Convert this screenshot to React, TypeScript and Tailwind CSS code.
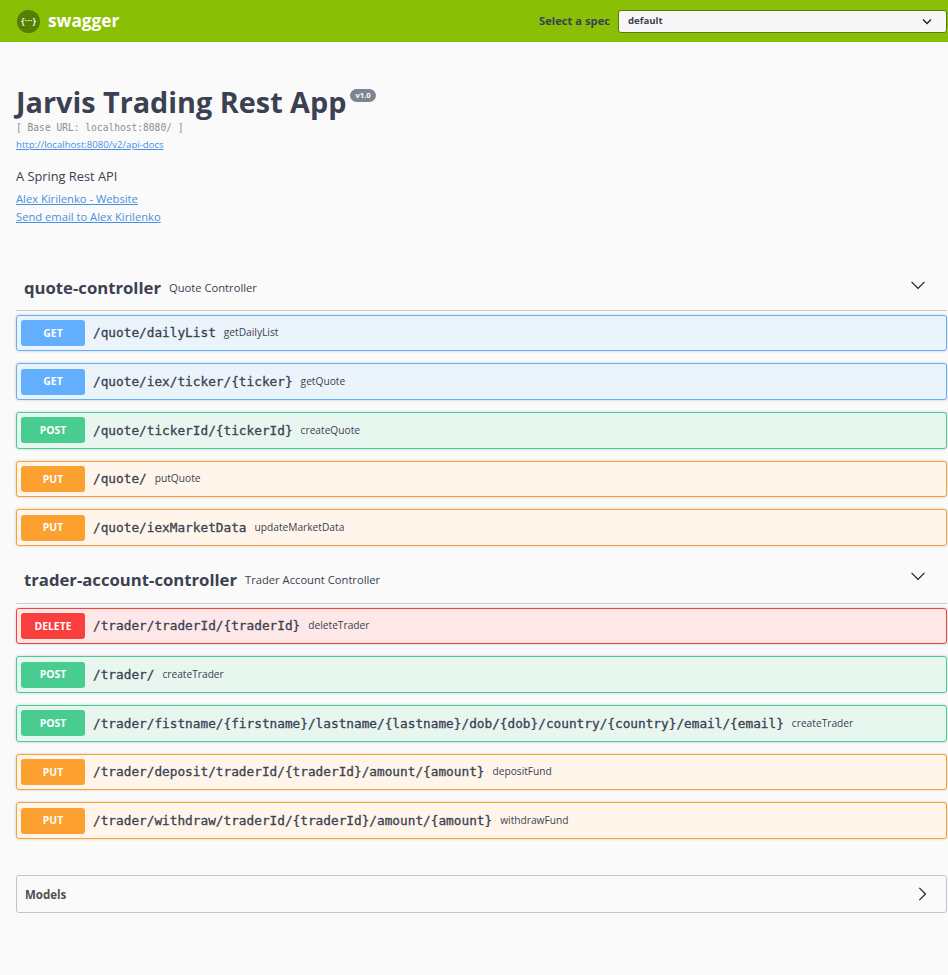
import React from "react";

type Method = "GET" | "POST" | "PUT" | "DELETE";

const styles: Record<Method, { row: string; badge: string }> = {
  GET: { row: "border-[#61affe] bg-[#ebf3fb]", badge: "bg-[#61affe]" },
  POST: { row: "border-[#49cc90] bg-[#e8f6f0]", badge: "bg-[#49cc90]" },
  PUT: { row: "border-[#fca130] bg-[#fff5ea]", badge: "bg-[#fca130]" },
  DELETE: { row: "border-[#f93e3e] bg-[#fde7e7]", badge: "bg-[#f93e3e]" },
};

function Row({ method, path, summary }: { method: Method; path: string; summary: string }) {
  const s = styles[method];
  return (
    <div className={`mb-[12px] flex h-[36.7px] items-center rounded-[3px] border pl-[4px] shadow-[0_0_3px_rgba(0,0,0,0.19)] ${s.row}`}>
      <span className={`flex h-[26px] w-[64px] shrink-0 items-center justify-center rounded-[3px] pt-[1px] text-[10.4px] font-bold text-white [font-family:'Open_Sans',sans-serif] ${s.badge}`}>
        {method}
      </span>
      <span className="ml-[8px] text-[12.76px] text-[#3b4151] [-webkit-text-stroke:0.3px_#3b4151] [font-family:'DejaVu_Sans_Mono',monospace]">{path}</span>
      <span className="ml-[8px] text-[10.2px] text-[#3b4151] [font-family:'Open_Sans',sans-serif]">{summary}</span>
    </div>
  );
}

function Chevron() {
  return (
    <svg width="16" height="16" viewBox="0 0 20 20" className="mb-[8px] fill-[#222]">
      <path d="M17.5 5.5 10 13 2.5 5.5 1.4 6.6 10 15.2l8.6-8.6z" />
    </svg>
  );
}

function Section({ name, desc, top, children }: { name: string; desc: string; top: string; children: React.ReactNode }) {
  return (
    <section>
      <div className={`flex items-center border-b border-[#c9cbd0] pl-[8px] pr-[21px] ${top}`}>
        <span className="pb-[2px] text-[16.7px] font-bold text-[#3b4151] [font-family:'Open_Sans',sans-serif]">{name}</span>
        <span className="ml-[8px] flex-1 text-[11.2px] text-[#3b4151] [font-family:'Open_Sans',sans-serif]">{desc}</span>
        <Chevron />
      </div>
      <div className="pt-[3.6px]">{children}</div>
    </section>
  );
}

export default function App() {
  return (
    <div className="min-h-[975px] bg-[#fafafa] [font-family:'Open_Sans',sans-serif]">
      <header className="flex h-[42px] items-center bg-[#89bf04] pl-[17px] pr-[1px]">
        <span className="flex h-[23px] w-[23px] items-center justify-center rounded-full bg-[#547f00] text-[9.5px] font-semibold text-white">{"{···}"}</span>
        <span className="ml-[8px] flex-1 text-[17.3px] font-bold text-white">swagger</span>
        <span className="mr-[8px] text-[11.2px] font-bold text-[#3b4151]">Select a spec</span>
        <div className="flex h-[23px] w-[329px] items-center justify-between rounded-[3px] border border-[#547f00] bg-[#f7f7f7] pl-[9px] pr-[14px] text-[9.6px] font-bold text-[#3b4151]">
          <span>default</span>
          <svg width="10" height="10" viewBox="0 0 20 20" className="fill-[#222]">
            <path d="M3 6 10 13 17 6 19 8 10 17 1 8z" />
          </svg>
        </div>
      </header>

      <main className="pl-[16px] pr-[1px]">
        <div className="pt-[42px] text-[#3b4151]">
          <div className="flex items-start">
            <h1 className="text-[28.8px] font-bold leading-[36px]">Jarvis Trading Rest App</h1>
            <span className="ml-[4px] mt-[4.5px] rounded-[8px] bg-[#7d8492] px-[5px] py-[1px] text-[7.6px] font-bold text-white">v1.0</span>
          </div>
          <div className="pt-[2px] text-[9.6px] leading-[12px] text-[#8b8e96] [font-family:'DejaVu_Sans_Mono',monospace]">[ Base URL: localhost:8080/ ]</div>
          <a className="mt-[4px] block text-[9.6px] leading-[13px] text-[#4990e2] underline">http://localhost:8080/v2/api-docs</a>
          <p className="mt-[17px] text-[12.8px] leading-[16px]">A Spring Rest API</p>
          <a className="mt-[7px] block text-[11.2px] leading-[16px] text-[#4990e2] underline">Alex Kirilenko - Website</a>
          <a className="mt-[2px] block text-[11.2px] leading-[16px] text-[#4990e2] underline">Send email to Alex Kirilenko</a>
        </div>

        <div className="pt-[42px]">
          <Section name="quote-controller" desc="Quote Controller" top="h-[44px]">
            <Row method="GET" path="/quote/dailyList" summary="getDailyList" />
            <Row method="GET" path="/quote/iex/ticker/{ticker}" summary="getQuote" />
            <Row method="POST" path="/quote/tickerId/{tickerId}" summary="createQuote" />
            <Row method="PUT" path="/quote/" summary="putQuote" />
            <Row method="PUT" path="/quote/iexMarketData" summary="updateMarketData" />
          </Section>
          <Section name="trader-account-controller" desc="Trader Account Controller" top="h-[45.9px]">
            <Row method="DELETE" path="/trader/traderId/{traderId}" summary="deleteTrader" />
            <Row method="POST" path="/trader/" summary="createTrader" />
            <Row method="POST" path="/trader/fistname/{firstname}/lastname/{lastname}/dob/{dob}/country/{country}/email/{email}" summary="createTrader" />
            <Row method="PUT" path="/trader/deposit/traderId/{traderId}/amount/{amount}" summary="depositFund" />
            <Row method="PUT" path="/trader/withdraw/traderId/{traderId}/amount/{amount}" summary="withdrawFund" />
          </Section>
        </div>

        <div className="mt-[36px] flex h-[38px] items-center justify-between rounded-[3px] border border-[#c3c3cb] pl-[8px] pr-[16px]">
          <span className="pt-[1px] text-[11.5px] font-bold text-[#505050]">Models</span>
          <svg width="16" height="16" viewBox="0 0 20 20" className="fill-[#222]">
            <path d="M13.25 10 6.1 2.85 7.2 1.75 15.45 10 7.2 18.25 6.1 17.15z" />
          </svg>
        </div>
      </main>
    </div>
  );
}
